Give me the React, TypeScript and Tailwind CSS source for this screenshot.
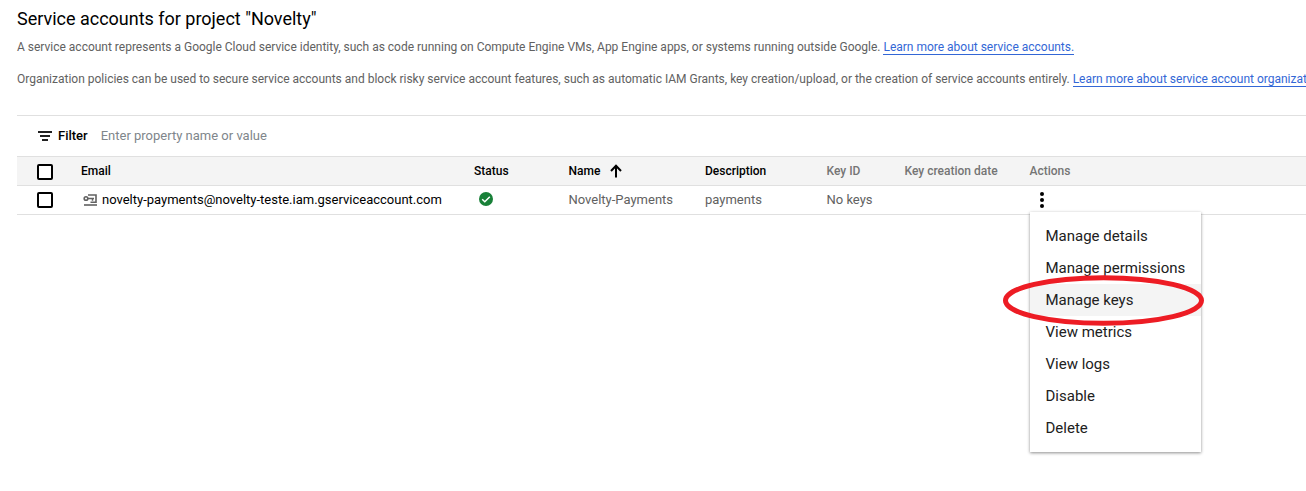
import React from "react";

const columns =
  "grid grid-cols-[64px_393px_94.5px_136.5px_121.5px_78px_125px_1fr] pr-2";

function Checkbox() {
  return (
    <span
      role="checkbox"
      aria-checked="false"
      className="ml-5 block h-4 w-4 rounded-[2px] border-2 border-black bg-white"
    />
  );
}

function FilterIcon() {
  return (
    <svg width="14" height="10" viewBox="0 0 14 10" fill="#212121">
      <path d="M0 0h14v2H0zM2 4h10v2H2zM4 8h6v2H4z" />
    </svg>
  );
}

function ServiceAccountIcon() {
  return (
    <svg width="14" height="12" viewBox="0 0 14 12" fill="none" stroke="#616161">
      <circle cx="3" cy="4.5" r="1.8" strokeWidth="1.6" />
      <path d="M5 4.5h6M9.5 4.5v2.3" strokeWidth="1.5" />
      <path d="M5 1h8v7.3H7.5" strokeWidth="1.6" />
      <path d="M1 11h13" strokeWidth="1.6" />
    </svg>
  );
}

function ArrowUpIcon() {
  return (
    <svg width="12" height="14" viewBox="0 0 12 14" fill="none" stroke="#000" strokeWidth="2">
      <path d="M6 13.5V1.5M1 7l5-5.2L11 7" />
    </svg>
  );
}

function CheckIcon() {
  return (
    <svg width="14" height="14" viewBox="0 0 14 14" className="mb-0.5 block">
      <circle cx="7" cy="7" r="7" fill="#188038" />
      <path d="M3.2 7.2l2.6 2.6 5-5" fill="none" stroke="#fff" strokeWidth="1.5" />
    </svg>
  );
}

function MoreIcon() {
  return (
    <svg width="4" height="16" viewBox="0 0 4 16" className="block">
      <circle cx="2" cy="2" r="2" />
      <circle cx="2" cy="8" r="2" />
      <circle cx="2" cy="14" r="2" />
    </svg>
  );
}

function Link({ children }: { children: React.ReactNode }) {
  return (
    <a href="#" className="border-b border-[#3367d6] text-[#3367d6]">
      {children}
    </a>
  );
}

const actions = [
  "Manage details",
  "Manage permissions",
  "Manage keys",
  "View metrics",
  "View logs",
  "Disable",
  "Delete",
];

function ActionsMenu() {
  return (
    <div className="absolute top-[26px] left-0 z-10 w-[171px] bg-white py-2 shadow-[0_1px_3px_rgba(0,0,0,0.45)]">
      {actions.map((label) => (
        <div
          key={label}
          className={
            label === "Manage keys"
              ? "h-8 bg-[#f4f4f4] pl-4 text-[15px] leading-8 text-[#212121]"
              : "h-8 pl-4 text-[15px] leading-8 text-[#212121]"
          }
        >
          {label}
        </div>
      ))}
      <svg
        className="pointer-events-none absolute top-[63px] -left-[27px]"
        width="202"
        height="51"
        viewBox="0 0 202 51"
        fill="none"
      >
        <ellipse cx="100.5" cy="25.5" rx="98" ry="22.8" stroke="#ed1c24" strokeWidth="5" />
      </svg>
    </div>
  );
}

export default function App() {
  return (
    <main className="h-[491px] w-full overflow-hidden bg-white pl-[17px] font-[Roboto,sans-serif] text-black">
      <h1 className="pt-[7px] text-[18px] leading-6 tracking-[-0.01px]">
        Service accounts for project "Novelty"
      </h1>
      <p className="mt-2 text-[12px] leading-4 tracking-[-0.005px] whitespace-nowrap text-[#616161]">
        A service account represents a Google Cloud service identity, such as code running on
        Compute Engine VMs, App Engine apps, or systems running outside Google.{" "}
        <Link>Learn more about service accounts.</Link>
      </p>
      <p className="mt-4 text-[12px] leading-4 tracking-[-0.005px] whitespace-nowrap text-[#616161]">
        Organization policies can be used to secure service accounts and block risky service account
        features, such as automatic IAM Grants, key creation/upload, or the creation of service
        accounts entirely. <Link>Learn more about service account organization policies.</Link>
      </p>

      <section className="mt-7 border-t border-[#e0e0e0]">
        <div className="flex h-10 items-center pl-[21px] text-[13px]">
          <FilterIcon />
          <span className="ml-1.5 font-medium">Filter</span>
          <span className="ml-[13px] text-[#80868b]">Enter property name or value</span>
        </div>

        <div
          className={`${columns} h-[30px] items-center border-y border-[#e0e0e0] bg-[#f4f4f4] text-[12px] font-medium`}
        >
          <div className="pt-0.5">
            <Checkbox />
          </div>
          <span>Email</span>
          <span>Status</span>
          <span className="flex items-center gap-2.5">
            Name <ArrowUpIcon />
          </span>
          <span>Description</span>
          <span className="text-[#757575]">Key ID</span>
          <span className="text-[#757575]">Key creation date</span>
          <span className="text-[#757575]">Actions</span>
        </div>

        <div
          className={`${columns} h-[29px] items-center border-b border-[#e0e0e0] text-[13px] text-[#616161]`}
        >
          <Checkbox />
          <div className="flex items-center gap-[5px] pl-0.5 text-black">
            <ServiceAccountIcon />
            <span>novelty-payments@novelty-teste.iam.gserviceaccount.com</span>
          </div>
          <div className="pl-[5px]">
            <CheckIcon />
          </div>
          <span>Novelty-Payments</span>
          <span>payments</span>
          <span>No keys</span>
          <span />
          <div className="relative h-full pt-1.5 pl-2.5 text-black">
            <MoreIcon />
            <ActionsMenu />
          </div>
        </div>
      </section>
    </main>
  );
}
